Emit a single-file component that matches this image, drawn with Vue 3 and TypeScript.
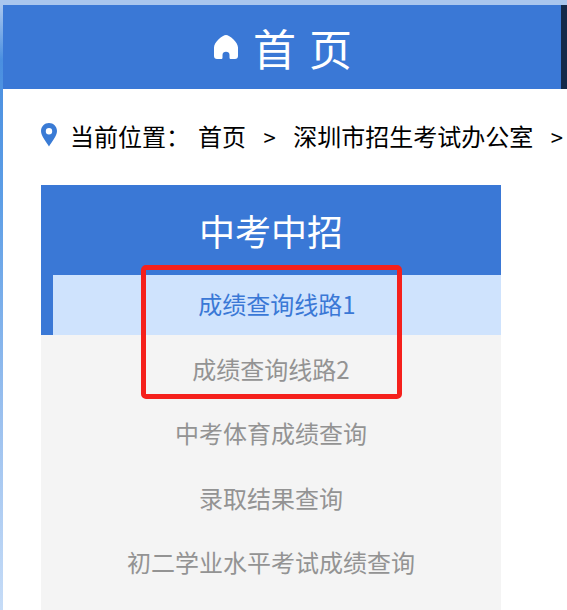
<script setup lang="ts">
const items: string[] = ['成绩查询线路2', '中考体育成绩查询', '录取结果查询', '初二学业水平考试成绩查询']
</script>

<template>
  <div class="page">
    <main class="sheet">
      <header class="banner">
        <div class="banner-main">
          <svg class="home" viewBox="0 0 26 26" aria-hidden="true">
            <path d="M13 1 C9.5 1 1 8 1 13.5 V22 C1 23.8 2.2 25 4 25 H8 C9 25 9.5 24.4 9.5 23.4 V21 C9.5 19 11 17.8 13 17.8 C15 17.8 16.5 19 16.5 21 V23.4 C16.5 24.4 17 25 18 25 H22 C23.8 25 25 23.8 25 22 V13.5 C25 8 16.5 1 13 1 Z" fill="#fff" />
          </svg>
          <h1 class="banner-title"><span>首</span><span>页</span></h1>
        </div>
        <div class="banner-edge"></div>
      </header>

      <nav class="crumbs">
        <svg class="pin" viewBox="0 0 16 24" aria-hidden="true">
          <path fill-rule="evenodd" d="M8 0 C3.6 0 0 3.5 0 8 C0 13 5.5 19 8 23.5 C10.5 19 16 13 16 8 C16 3.5 12.4 0 8 0 Z M8 5 A3.2 3.2 0 1 1 8 11.4 A3.2 3.2 0 1 1 8 5 Z" fill="#3a7bd5" />
        </svg>
        <span class="crumb-label">当前位置：</span>
        <span>首页</span>
        <span class="sep">&gt;</span>
        <span>深圳市招生考试办公室</span>
        <span class="sep">&gt;</span>
      </nav>

      <section class="menu">
        <h2 class="menu-title">中考中招</h2>
        <ul class="menu-list">
          <li class="menu-item active">成绩查询线路1</li>
          <li v-for="item in items" :key="item" class="menu-item">{{ item }}</li>
        </ul>
        <div class="annotation"></div>
      </section>
    </main>
  </div>
</template>

<style>
html, body { margin: 0; overflow: hidden; background: #fff; }
</style>

<style scoped>
.page {
  width: 567px;
  height: 610px;
  box-sizing: border-box;
  padding: 5px 0 0 3px;
  overflow: hidden;
  background: linear-gradient(180deg, #a9c6ee 0, #a9c6ee 5px, #4a8fe0 60px, #5d9ee6 200px, #9cc1ef 420px, #c6dcf7 610px);
  font-family: "Noto Sans CJK SC", "Liberation Sans", sans-serif;
}
.sheet {
  height: 605px;
  display: flex;
  flex-direction: column;
  background: #fff;
}
.banner {
  height: 84px;
  flex: none;
  display: flex;
  background: #3a78d6;
}
.banner-main {
  flex: 1;
  display: flex;
  align-items: center;
  justify-content: center;
  gap: 14px;
  padding-left: 1px;
  color: #fff;
}
.banner-edge {
  width: 6px;
  background: #14294a;
}
.home {
  width: 26px;
  height: 26px;
}
.banner-title {
  margin: 0;
  display: flex;
  gap: 13px;
  font-size: 43px;
  font-weight: 400;
  line-height: 82px;
}
.crumbs {
  height: 96px;
  flex: none;
  box-sizing: border-box;
  padding: 0 0 0 38px;
  display: flex;
  align-items: center;
  white-space: nowrap;
  font-size: 24px;
  line-height: 34px;
  color: #000;
}
.crumbs > span {
  position: relative;
  top: -1px;
}
.pin {
  width: 16px;
  height: 24px;
  margin-right: 13px;
  margin-top: -4px;
  flex: none;
}
.crumb-label {
  width: 128px;
  flex: none;
}
.sep {
  margin: 0 17.5px;
  font-size: 22px;
}
.menu {
  position: relative;
  flex: 1;
  width: 460px;
  margin-left: 38px;
  background: #f4f4f4;
}
.menu-title {
  margin: 0;
  height: 90px;
  background: #3a78d6;
  color: #fff;
  font-size: 36px;
  font-weight: 400;
  line-height: 90px;
  text-align: center;
}
.menu-list {
  margin: 0;
  padding: 0;
  list-style: none;
  display: flex;
  flex-direction: column;
  gap: 4.5px;
}
.menu-item {
  height: 60px;
  line-height: 58px;
  text-align: center;
  font-size: 24px;
  color: #939393;
}
.menu-item.active {
  box-sizing: border-box;
  border-left: 12px solid #3a78d6;
  background: #cfe3fd;
  color: #3a78d6;
}
.annotation {
  position: absolute;
  left: 100px;
  top: 80px;
  width: 261px;
  height: 134px;
  box-sizing: border-box;
  border: 5px solid #f5201c;
  border-radius: 5px;
}
</style>
